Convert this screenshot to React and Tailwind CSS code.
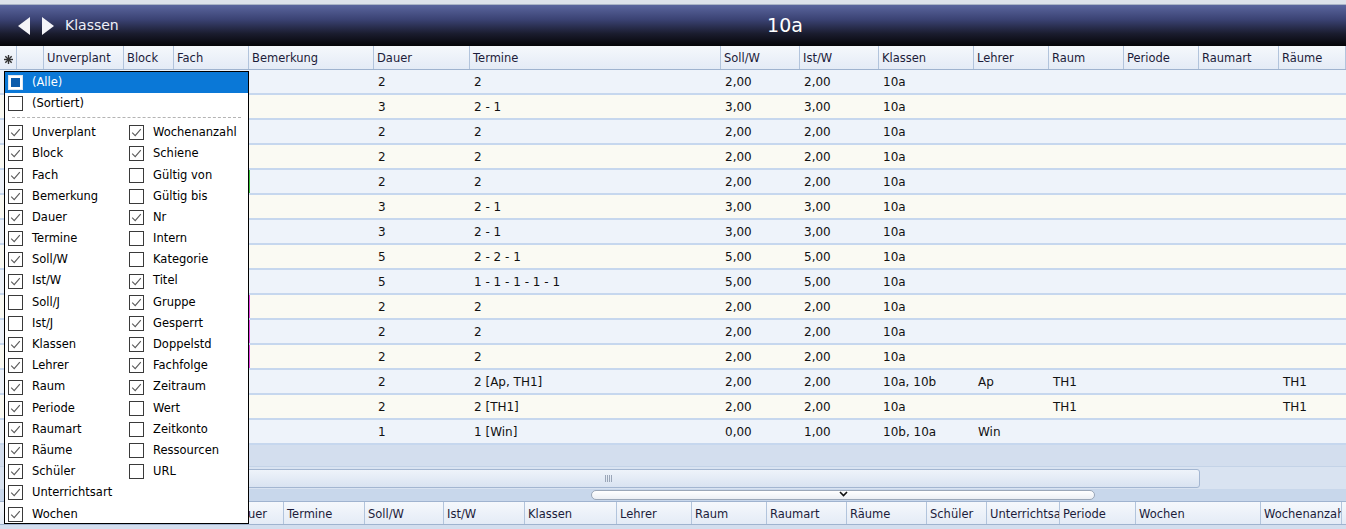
import React from 'react';

const cols = [
    { w: 'w-[17px]', l: '' },
    { w: 'w-[27px]', l: '' },
    { w: 'w-[80px]', l: 'Unverplant' },
    { w: 'w-[50px]', l: 'Block' },
    { w: 'w-[75px]', l: 'Fach' },
    { w: 'w-[125px]', l: 'Bemerkung', k: 'b' },
    { w: 'w-[96px]', l: 'Dauer', k: 'd' },
    { w: 'w-[251px]', l: 'Termine', k: 't' },
    { w: 'w-[79px]', l: 'Soll/W', k: 's' },
    { w: 'w-[79px]', l: 'Ist/W', k: 'i' },
    { w: 'w-[95px]', l: 'Klassen', k: 'k' },
    { w: 'w-[75px]', l: 'Lehrer', k: 'le' },
    { w: 'w-[75px]', l: 'Raum', k: 'r' },
    { w: 'w-[75px]', l: 'Periode' },
    { w: 'w-[80px]', l: 'Raumart' },
    { w: 'flex-1', l: 'Räume', k: 'rr' },
];

const rows = [
    { d: '2', t: '2', s: '2,00', i: '2,00', k: '10a' },
    { d: '3', t: '2 - 1', s: '3,00', i: '3,00', k: '10a' },
    { d: '2', t: '2', s: '2,00', i: '2,00', k: '10a' },
    { d: '2', t: '2', s: '2,00', i: '2,00', k: '10a' },
    { d: '2', t: '2', s: '2,00', i: '2,00', k: '10a', mark: 'border-[#3cc03c]' },
    { d: '3', t: '2 - 1', s: '3,00', i: '3,00', k: '10a' },
    { d: '3', t: '2 - 1', s: '3,00', i: '3,00', k: '10a' },
    { d: '5', t: '2 - 2 - 1', s: '5,00', i: '5,00', k: '10a' },
    { d: '5', t: '1 - 1 - 1 - 1 - 1', s: '5,00', i: '5,00', k: '10a' },
    { d: '2', t: '2', s: '2,00', i: '2,00', k: '10a', mark: 'border-[#e040e0]' },
    { d: '2', t: '2', s: '2,00', i: '2,00', k: '10a', mark: 'border-[#e040e0]' },
    { d: '2', t: '2', s: '2,00', i: '2,00', k: '10a', mark: 'border-[#e040e0]' },
    { d: '2', t: '2 [Ap, TH1]', s: '2,00', i: '2,00', k: '10a, 10b', le: 'Ap', r: 'TH1', rr: 'TH1' },
    { d: '2', t: '2 [TH1]', s: '2,00', i: '2,00', k: '10a', r: 'TH1', rr: 'TH1' },
    { d: '1', t: '1 [Win]', s: '0,00', i: '1,00', k: '10b, 10a', le: 'Win' },
];

const bottomCols = [
    { w: 'w-[55px]', l: 'Dauer' },
    { w: 'w-[81px]', l: 'Termine' },
    { w: 'w-[79px]', l: 'Soll/W' },
    { w: 'w-[81px]', l: 'Ist/W' },
    { w: 'w-[92px]', l: 'Klassen' },
    { w: 'w-[75px]', l: 'Lehrer' },
    { w: 'w-[75px]', l: 'Raum' },
    { w: 'w-[80px]', l: 'Raumart' },
    { w: 'w-[80px]', l: 'Räume' },
    { w: 'w-[60px]', l: 'Schüler' },
    { w: 'w-[73px]', l: 'Unterrichtsart' },
    { w: 'w-[76px]', l: 'Periode' },
    { w: 'w-[125px]', l: 'Wochen' },
    { w: 'w-[81px]', l: 'Wochenanzahl' },
];

const left = [
    ['Unverplant', 1], ['Block', 1], ['Fach', 1], ['Bemerkung', 1], ['Dauer', 1], ['Termine', 1],
    ['Soll/W', 1], ['Ist/W', 1], ['Soll/J', 0], ['Ist/J', 0], ['Klassen', 1], ['Lehrer', 1],
    ['Raum', 1], ['Periode', 1], ['Raumart', 1], ['Räume', 1], ['Schüler', 1], ['Unterrichtsart', 1], ['Wochen', 1],
];

const right = [
    ['Wochenanzahl', 1], ['Schiene', 1], ['Gültig von', 0], ['Gültig bis', 0], ['Nr', 1], ['Intern', 0],
    ['Kategorie', 0], ['Titel', 1], ['Gruppe', 1], ['Gesperrt', 1], ['Doppelstd', 1], ['Fachfolge', 1],
    ['Zeitraum', 1], ['Wert', 0], ['Zeitkonto', 0], ['Ressourcen', 0], ['URL', 0],
];

function Box({ on }) {
    return (
        <span className="w-[15px] h-[15px] shrink-0 border border-[#3a3a3a] bg-white flex items-center justify-center">
            {on ? (
                <svg width="11" height="11" viewBox="0 0 11 11">
                    <path d="M1.2 5.6 L4.2 8.6 L9.8 2.2" stroke="#5a5a5a" strokeWidth="1.1" fill="none" />
                </svg>
            ) : null}
        </span>
    );
}

function Item({ label, on }) {
    return (
        <div className="flex items-center gap-[9px] pl-[3px] h-[21.2px] text-black">
            <Box on={on} />
            <span>{label}</span>
        </div>
    );
}

function HeaderCell({ w, children, extra = '' }) {
    return (
        <div className={`${w} shrink-0 h-full border-r border-[#b2c4dc] pl-[3px] pt-[3px] flex items-center overflow-hidden whitespace-nowrap ${extra}`}>
            {children}
        </div>
    );
}

export default function App() {
    const cell = (c, r) => {
        const v = c.k ? r[c.k] : '';
        const mark = c.k === 'b' && r.mark ? `border-l ${r.mark}` : '';
        return (
            <div key={c.l + c.w} className={`${c.w} shrink-0 h-full pl-[4px] pt-[1px] flex items-center whitespace-nowrap ${mark}`}>
                {v}
            </div>
        );
    };

    return (
        <div
            className="relative w-[1346px] h-[529px] overflow-hidden bg-[#d3deee] flex flex-col text-[11.5px] text-[#1c1c3a]"
            style={{ fontFamily: '"DejaVu Sans", Verdana, sans-serif' }}
        >
            {/* top strip */}
            <div className="h-[5px] shrink-0 bg-[#dde2ea] border-b border-[#aab4c6]" />

            {/* title bar */}
            <div className="h-[41px] shrink-0 flex items-center bg-[linear-gradient(to_bottom,#5a659d_0%,#3b4374_35%,#1a1c2e_70%,#050508_100%)]">
                <div className="w-[224px] shrink-0 flex items-center pl-[17px]">
                    <svg width="14" height="20" viewBox="0 0 14 20">
                        <polygon points="13,1 13,19 1,10" fill="#f4f4f8" />
                    </svg>
                    <svg width="14" height="20" viewBox="0 0 14 20" className="ml-[10px]">
                        <polygon points="1,1 1,19 13,10" fill="#f4f4f8" />
                    </svg>
                    <span className="ml-[10px] text-[14px] text-[#eef0f8]">Klassen</span>
                </div>
                <div className="flex-1 flex justify-center text-[19px] text-white">10a</div>
            </div>

            {/* header row */}
            <div className="h-[24px] shrink-0 flex bg-[linear-gradient(to_bottom,#f5f8fc,#e4ebf6)] border-b border-[#9fb3cf]">
                {cols.map((c, n) => (
                    <HeaderCell key={n} w={c.w}>
                        {n === 0 ? (
                            <svg width="9" height="9" viewBox="0 0 9 9" className="ml-[1px]">
                                <g stroke="#333" strokeWidth="1.4">
                                    <line x1="4.5" y1="0" x2="4.5" y2="9" />
                                    <line x1="0" y1="4.5" x2="9" y2="4.5" />
                                    <line x1="1.3" y1="1.3" x2="7.7" y2="7.7" />
                                    <line x1="7.7" y1="1.3" x2="1.3" y2="7.7" />
                                </g>
                            </svg>
                        ) : (
                            c.l
                        )}
                    </HeaderCell>
                ))}
            </div>

            {/* data rows */}
            <div className="shrink-0 flex flex-col text-[12px] text-[#111]">
                {rows.map((r, n) => (
                    <div
                        key={n}
                        className={`h-[25px] flex border-b-2 border-[#c6d7ee] ${n % 2 === 0 ? 'bg-[#eef3fa]' : 'bg-[#fafaf3]'}`}
                    >
                        {cols.map((c) => cell(c, r))}
                    </div>
                ))}
            </div>

            {/* empty area */}
            <div className="h-[21px] shrink-0 bg-[#d3deee]" />

            {/* horizontal scrollbar */}
            <div className="h-[23px] shrink-0 flex items-center bg-[#d9e3f1] border-t border-[#c4d3e7]">
                <div className="ml-[17px] w-[1183px] h-[19px] rounded-[3px] border border-[#a3b6d1] bg-[linear-gradient(to_bottom,#eef3fa,#d9e3f1)] flex items-center justify-center">
                    <div className="flex gap-[1px]">
                        <span className="w-[1px] h-[7px] bg-[#9aa6b8]" />
                        <span className="w-[1px] h-[7px] bg-[#9aa6b8]" />
                        <span className="w-[1px] h-[7px] bg-[#9aa6b8]" />
                        <span className="w-[1px] h-[7px] bg-[#9aa6b8]" />
                    </div>
                </div>
            </div>

            {/* splitter */}
            <div className="h-[12px] shrink-0 bg-[#c8d7eb] flex items-center">
                <div className="ml-[591px] w-[504px] h-[10px] rounded-full border border-[#9ba7b8] bg-[linear-gradient(to_bottom,#ffffff,#eceff4)] flex items-start justify-center">
                    <svg width="9" height="6" viewBox="0 0 9 6">
                        <path d="M1 1 L4.5 4.5 L8 1" stroke="#111" strokeWidth="1.6" fill="none" />
                    </svg>
                </div>
            </div>

            {/* bottom header row */}
            <div className="h-[24px] shrink-0 flex bg-[linear-gradient(to_bottom,#f5f8fc,#e4ebf6)] border-y border-[#9fb3cf]">
                <div className="w-[229px] shrink-0 border-r border-[#b2c4dc]" />
                {bottomCols.map((c) => (
                    <HeaderCell key={c.l} w={c.w}>
                        {c.l}
                    </HeaderCell>
                ))}
                <div className="flex-1" />
            </div>

            {/* column chooser popup */}
            <div className="absolute left-[4px] top-[71px] w-[245px] h-[453px] bg-white border border-black text-[11.5px]">
                <div className="h-[21px] bg-[#0a78d7] flex items-center gap-[9px] pl-[3px] text-white">
                    <span className="w-[15px] h-[15px] shrink-0 border border-[#dfe8f2] bg-white p-[2px]">
                        <span className="block w-full h-full bg-[#0c5cac]" />
                    </span>
                    <span>(Alle)</span>
                </div>
                <Item label="(Sortiert)" on={false} />
                <div className="mx-[7px] mt-[3px] mb-[4px] border-t border-dashed border-[#b4b4b4]" />
                <div className="grid grid-cols-[121px_1fr]">
                    <div className="flex flex-col">
                        {left.map(([l, on]) => (
                            <Item key={l} label={l} on={!!on} />
                        ))}
                    </div>
                    <div className="flex flex-col">
                        {right.map(([l, on]) => (
                            <Item key={l} label={l} on={!!on} />
                        ))}
                    </div>
                </div>
            </div>
        </div>
    );
}
